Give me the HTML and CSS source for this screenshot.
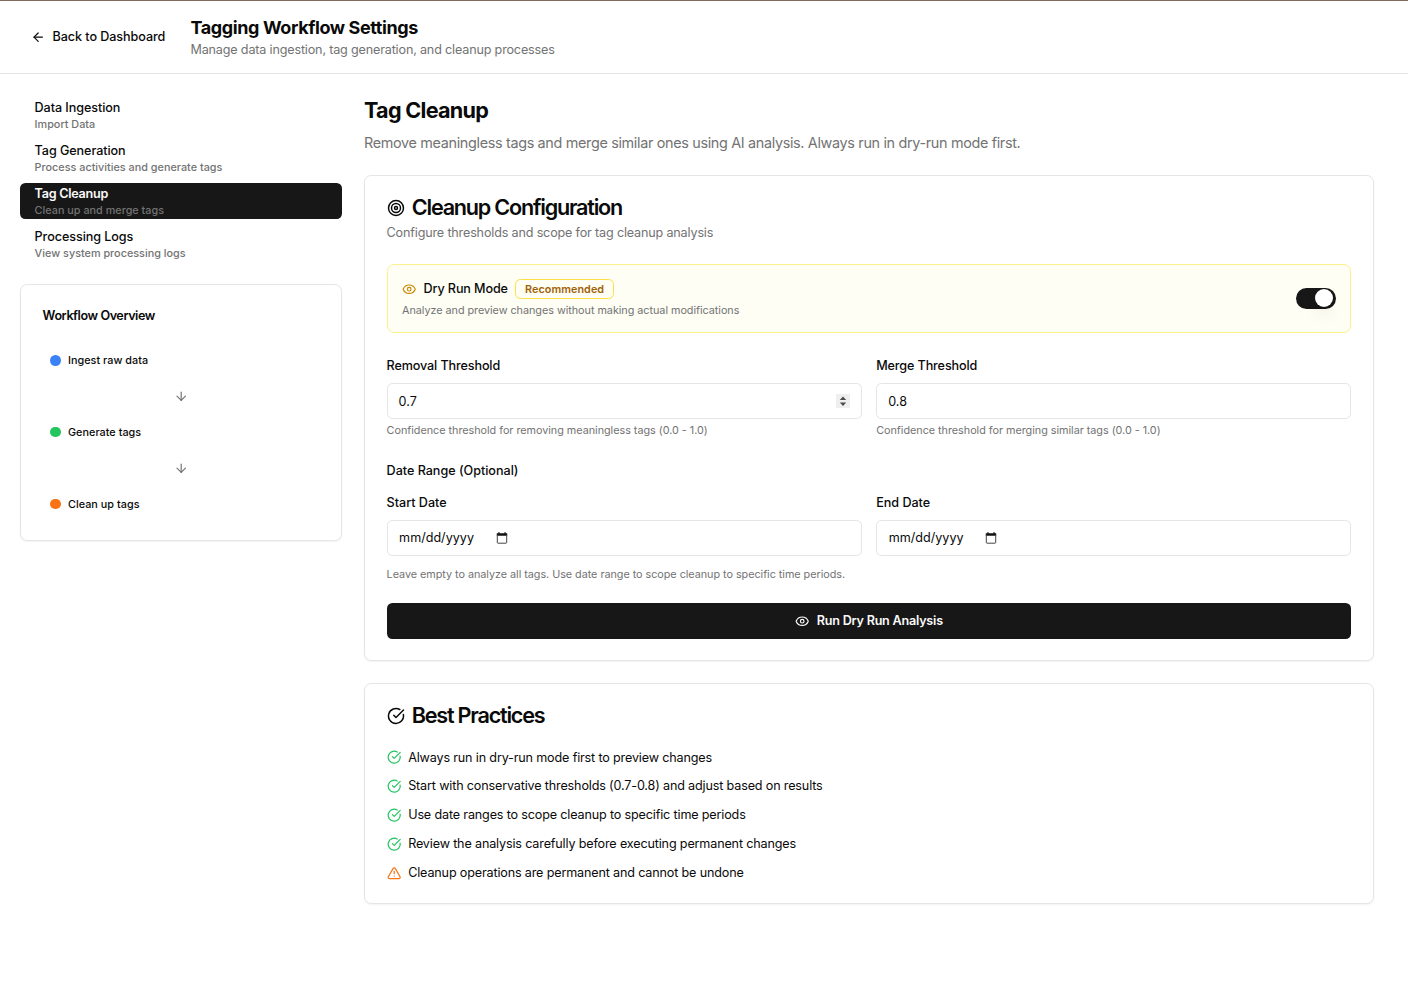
FILE: index.html
```html
<!DOCTYPE html>
<html lang="en">
<head>
<meta charset="utf-8">
<title>Tagging Workflow Settings</title>
<link rel="stylesheet" href="styles.css">
</head>
<body>
<svg class="sprite" aria-hidden="true">
  <symbol id="check" viewBox="0 0 24 24"><path d="M21.801 10A10 10 0 1 1 17 3.335"/><path d="m9 11 3 3L22 4"/></symbol>
  <symbol id="eye" viewBox="0 0 24 24"><path d="M2.062 12.348a1 1 0 0 1 0-.696 10.75 10.75 0 0 1 19.876 0 1 1 0 0 1 0 .696 10.75 10.75 0 0 1-19.876 0"/><circle cx="12" cy="12" r="3"/></symbol>
  <symbol id="down" viewBox="0 0 24 24"><path d="M12 5v14"/><path d="m19 12-7 7-7-7"/></symbol>
  <symbol id="calendar" viewBox="0 0 12 12"><path class="solid" d="M.8 1.3h1.5V.3h1.3v1h4.8v-1h1.3v1h1.5v2.5H.8z"/><path class="outline" d="M1.3 2.5v8q0 .7.7.7h8q.7 0 .7-.7v-8"/></symbol>
</svg>

<header class="topbar">
  <a class="back"><svg class="icon" viewBox="0 0 24 24"><path d="m12 19-7-7 7-7"/><path d="M19 12H5"/></svg><span>Back to Dashboard</span></a>
  <div>
    <h1 class="page-title">Tagging Workflow Settings</h1>
    <p class="page-subtitle">Manage data ingestion, tag generation, and cleanup processes</p>
  </div>
</header>

<div class="layout">
  <aside class="sidebar">
    <nav class="nav">
      <a class="nav-item"><span class="nav-title">Data Ingestion</span><span class="nav-note">Import Data</span></a>
      <a class="nav-item"><span class="nav-title">Tag Generation</span><span class="nav-note">Process activities and generate tags</span></a>
      <a class="nav-item active"><span class="nav-title">Tag Cleanup</span><span class="nav-note">Clean up and merge tags</span></a>
      <a class="nav-item"><span class="nav-title">Processing Logs</span><span class="nav-note">View system processing logs</span></a>
    </nav>
    <section class="card overview">
      <h3 class="overview-title">Workflow Overview</h3>
      <div class="steps">
        <div class="step"><i class="dot blue"></i><span>Ingest raw data</span></div>
        <svg class="icon arrow"><use href="#down"/></svg>
        <div class="step"><i class="dot green"></i><span>Generate tags</span></div>
        <svg class="icon arrow"><use href="#down"/></svg>
        <div class="step"><i class="dot orange"></i><span>Clean up tags</span></div>
      </div>
    </section>
  </aside>

  <main class="content">
    <div class="intro">
      <h2 class="section-title">Tag Cleanup</h2>
      <p class="section-text">Remove meaningless tags and merge similar ones using AI analysis. Always run in dry-run mode first.</p>
    </div>

    <section class="card config">
      <div class="card-head">
        <h3 class="card-title"><svg class="icon large" viewBox="0 0 24 24"><circle cx="12" cy="12" r="10"/><circle cx="12" cy="12" r="6"/><circle cx="12" cy="12" r="2"/></svg><span>Cleanup Configuration</span></h3>
        <p class="card-text">Configure thresholds and scope for tag cleanup analysis</p>
      </div>
      <div class="dry-run">
        <div>
          <div class="dry-head"><svg class="icon eye"><use href="#eye"/></svg><span class="label">Dry Run Mode</span><span class="badge">Recommended</span></div>
          <p class="help lower">Analyze and preview changes without making actual modifications</p>
        </div>
        <div class="switch" role="switch" aria-checked="true"><i class="knob"></i></div>
      </div>
      <div class="fields">
        <div class="field">
          <div class="label-row"><span class="label">Removal Threshold</span></div>
          <div class="input"><span class="value">0.7</span><svg class="spinner" viewBox="0 0 14 14"><path d="M7 2.6 10.2 6H3.8z"/><path d="M7 12 10.2 8.6H3.8z"/></svg></div>
          <p class="help near">Confidence threshold for removing meaningless tags (0.0 - 1.0)</p>
        </div>
        <div class="field">
          <div class="label-row"><span class="label">Merge Threshold</span></div>
          <div class="input"><span class="value">0.8</span></div>
          <p class="help near">Confidence threshold for merging similar tags (0.0 - 1.0)</p>
        </div>
      </div>
      <div class="range">
        <div class="label-row range-label"><span class="label short">Date Range (Optional)</span></div>
        <div class="fields">
          <div class="field">
            <div class="label-row"><span class="label short">Start Date</span></div>
            <div class="input date"><span>mm/dd/yyyy</span><svg class="calendar"><use href="#calendar"/></svg></div>
          </div>
          <div class="field">
            <div class="label-row"><span class="label short">End Date</span></div>
            <div class="input date"><span>mm/dd/yyyy</span><svg class="calendar"><use href="#calendar"/></svg></div>
          </div>
        </div>
        <p class="help range-help">Leave empty to analyze all tags. Use date range to scope cleanup to specific time periods.</p>
      </div>
      <button class="run"><svg class="icon"><use href="#eye"/></svg><span>Run Dry Run Analysis</span></button>
    </section>

    <section class="card practices">
      <h3 class="card-title"><svg class="icon large"><use href="#check"/></svg><span>Best Practices</span></h3>
      <ul class="tips">
        <li><svg class="icon ok"><use href="#check"/></svg><span>Always run in dry-run mode first to preview changes</span></li>
        <li><svg class="icon ok"><use href="#check"/></svg><span>Start with conservative thresholds (0.7-0.8) and adjust based on results</span></li>
        <li><svg class="icon ok"><use href="#check"/></svg><span>Use date ranges to scope cleanup to specific time periods</span></li>
        <li><svg class="icon ok"><use href="#check"/></svg><span>Review the analysis carefully before executing permanent changes</span></li>
        <li><svg class="icon warn" viewBox="0 0 24 24"><path d="m21.73 18-8-14a2 2 0 0 0-3.48 0l-8 14A2 2 0 0 0 4 21h16a2 2 0 0 0 1.73-3"/><path d="M12 9v4"/><path d="M12 17h.01"/></svg><span>Cleanup operations are permanent and cannot be undone</span></li>
      </ul>
    </section>
  </main>
</div>
</body>
</html>
```
FILE: styles.css
```css
* { box-sizing: border-box; margin: 0; padding: 0; }
html { font-size: 14.4px; }
body { min-height: 1007px; border-top: 1px solid #826b5e; background: #fff; color: #0a0a0a; font-family: Inter, "Liberation Sans", sans-serif; font-size: 12.6px; line-height: 18px; white-space: nowrap; }
.sprite { display: none; }
.icon { display: block; flex: none; width: 14.4px; height: 14.4px; fill: none; stroke: currentColor; stroke-width: 2; stroke-linecap: round; stroke-linejoin: round; }
.icon.large { width: 18px; height: 18px; }
.label { font-weight: 500; letter-spacing: -.12px; }
.label.short { letter-spacing: -.02px; }

.topbar { display: flex; align-items: center; gap: 25.2px; height: 73px; padding-left: 31px; border-bottom: 1px solid #e5e5e5; }
.back { display: flex; align-items: center; gap: 7.2px; font-weight: 500; letter-spacing: -.07px; }
.page-title { font-size: 18px; line-height: 25.2px; font-weight: 700; letter-spacing: -.4px; }
.page-subtitle { color: #737373; letter-spacing: -.172px; }

.layout { display: grid; grid-template-columns: 322px 1010px; gap: 22px; align-items: start; padding: 22.4px 0 0 20px; }
.sidebar { display: grid; gap: 21.6px; }
.nav { display: grid; gap: 7.2px; }
.nav-item { display: flex; flex-direction: column; height: 36px; padding: 2.15px 0 0 14.6px; border-radius: 5.4px; font-weight: 500; }
.nav-title { letter-spacing: -.07px; }
.nav-note { margin-top: 1px; color: #737373; font-size: 10.8px; line-height: 14.4px; letter-spacing: .02px; }
.nav-item.active { background: #171717; color: #fafafa; }
.active .nav-title { font-weight: 600; letter-spacing: -.26px; }

.card { padding: 21.6px; border: 1px solid #e5e5e5; border-radius: 7.2px; background: #fff; box-shadow: 0 1px 2px rgb(0 0 0 / 5%); }
.overview-title { margin: .8px 0 -.8px; font-size: 12.6px; line-height: 18px; font-weight: 600; letter-spacing: -.43px; }
.steps { display: grid; gap: 14.4px; margin-top: 21.6px; }
.step { display: flex; align-items: center; gap: 7.4px; padding: 7.2px; font-size: 10.8px; line-height: 14.4px; font-weight: 500; letter-spacing: .04px; }
.step span { margin: .9px 0 -.9px; }
.dot { width: 10.8px; height: 10.8px; border-radius: 50%; }
.blue { background: #3b82f6; }
.green { background: #22c55e; }
.orange { background: #f97316; }
.arrow { justify-self: center; color: #737373; }

.content { display: grid; gap: 21.6px; }
.intro { margin-bottom: -.8px; }
.section-title { font-size: 21.6px; line-height: 28.8px; font-weight: 700; letter-spacing: -.72px; }
.section-text { margin-top: 7.2px; color: #737373; font-size: 14.4px; line-height: 21.6px; letter-spacing: -.333px; }
.config { display: grid; gap: 21.6px; }
.card-title { display: flex; align-items: center; gap: 7.2px; font-size: 21.6px; line-height: 21.6px; font-weight: 600; letter-spacing: -1.22px; }
.card-text { margin-top: 5.4px; color: #737373; letter-spacing: -.17px; }
.dry-run { display: flex; align-items: center; justify-content: space-between; padding: 14.4px; border: 1px solid #fef08a; border-radius: 7.2px; background: #fefef5; }
.dry-head { display: flex; align-items: center; gap: 7.2px; margin-bottom: 3.6px; }
.eye { color: #ca8a04; }
.badge { padding: 2.6px 9px 1px; border: 1px solid #fde047; border-radius: 5.4px; color: #a16207; font-size: 10.8px; line-height: 14.4px; font-weight: 600; letter-spacing: .06px; }
.help { color: #737373; font-size: 10.8px; line-height: 14.4px; letter-spacing: -.03px; }
.help.lower { margin: 4.4px 0 -.8px; }
.switch { width: 39.6px; height: 21.6px; padding: 1.8px 2.7px 1.8px 1.8px; border-radius: 11px; background: #171717; }
.knob { display: block; width: 18px; height: 18px; margin-left: auto; border-radius: 50%; background: #fff; box-shadow: 0 10px 15px -3px rgb(0 0 0 / 10%), 0 4px 6px -4px rgb(0 0 0 / 10%); }
.fields { display: grid; grid-template-columns: 1fr 1fr; gap: 14.4px; }
.label-row { height: 21.6px; padding-top: .8px; line-height: 21.6px; }
.range-label { padding-top: 1.7px; }
.input { display: flex; align-items: center; justify-content: space-between; height: 36px; margin-top: 7.2px; padding: 0 11px; border: 1px solid #e5e5e5; border-radius: 5.4px; }
.value { padding-top: 1.6px; }
.help.near { margin: 5px 0 -1.4px; letter-spacing: -.02px; }
.spinner { width: 14px; height: 14px; background: #efefef; fill: #4b4b4b; }
.date { justify-content: flex-start; gap: 21.8px; padding-left: 11.5px; }
.calendar { width: 12px; height: 12px; }
.solid { fill: #111; }
.outline { fill: none; stroke: #444; stroke-width: 1; }
.range { display: grid; gap: 10.8px; }
.range-help { margin: 1.6px 0 -1.6px; }
.run { display: flex; align-items: center; justify-content: center; gap: 7.2px; height: 36px; border: 0; border-radius: 5.4px; background: #171717; color: #fafafa; font: inherit; font-weight: 600; letter-spacing: -.22px; }
.run .icon { margin: .8px 0 -.8px; }
.tips { display: grid; gap: 10.8px; margin-top: 21.6px; list-style: none; }
.tips li { display: flex; align-items: center; gap: 7.2px; letter-spacing: -.16px; }
.ok { color: #22c55e; }
.warn { color: #f97316; }
```
